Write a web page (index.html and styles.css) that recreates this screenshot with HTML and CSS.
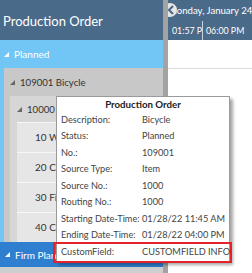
FILE: index.html
```html
<!DOCTYPE html>
<html>
<head>
<meta charset="utf-8">
<link rel="stylesheet" href="styles.css">
</head>
<body>
<div class="app">
  <div class="left">
    <div class="left-head">Production Order</div>
    <div class="group planned">
      <div class="group-title"><span class="tri"></span>Planned</div>
      <div class="group-body">
        <div class="lvl1">
          <div class="lvl1-title"><span class="tri dark"></span>109001 Bicycle</div>
          <div class="lvl1-body">
            <div class="lvl2">
              <div class="lvl2-title"><span class="tri dark"></span>10000</div>
              <div class="lvl2-body">
                <div class="op">10 Wheels</div>
                <div class="op">20 Chassis</div>
                <div class="op">30 Finish</div>
                <div class="op">40 Control</div>
              </div>
            </div>
          </div>
        </div>
      </div>
    </div>
    <div class="group firm">
      <div class="group-title"><span class="tri"></span>Firm Planned</div>
    </div>
    <div class="left-foot"></div>
  </div>
  <div class="split"></div>
  <div class="right">
    <div class="time-head">
      <div class="day-line"><span class="day">Monday, January 24, 2022</span><span class="nav"><svg width="8" height="10" viewBox="0 0 8 10"><path d="M6 1 L2 5 L6 9" fill="none" stroke="#4a6a8a" stroke-width="2.2"/></svg></span></div>
      <div class="hour-line">
        <div class="hour first">01:57 PM</div>
        <div class="hour">06:00 PM</div>
      </div>
    </div>
    <div class="time-body">
      <div class="trow r28"></div>
    </div>
  </div>
</div>
<div class="tooltip">
  <div class="tt-title">Production Order</div>
  <div class="tt-grid">
    <span>Description:</span><span>Bicycle</span>
    <span>Status:</span><span>Planned</span>
    <span>No.:</span><span>109001</span>
    <span>Source Type:</span><span>Item</span>
    <span>Source No.:</span><span>1000</span>
    <span>Routing No.:</span><span>1000</span>
    <span>Starting Date-Time:</span><span>01/28/22 11:45 AM</span>
    <span>Ending Date-Time:</span><span>01/28/22 04:00 PM</span>
    <span>CustomField:</span><span>CUSTOMFIELD INFO</span>
  </div>
</div>
<div class="highlight"></div>
</body>
</html>
```
FILE: styles.css
```css
* { box-sizing: border-box; }
html, body { margin: 0; padding: 0; }
body {
  width: 252px;
  height: 273px;
  overflow: hidden;
  position: relative;
  font-family: "Lato", "Open Sans", sans-serif;
  background: #fff;
}
.app {
  display: flex;
  height: 273px;
}
.left {
  width: 163px;
  flex-shrink: 0;
  display: flex;
  flex-direction: column;
  overflow: hidden;
  background: #c9c9c9;
}
.left-head {
  height: 40px;
  background: #4a6a8a;
  color: #fff;
  font-size: 13px;
  line-height: 16px;
  padding: 13px 0 0 3px;
  white-space: nowrap;
}
.group-title {
  display: flex;
  align-items: center;
  color: #fff;
  font-size: 10px;
  white-space: nowrap;
}
.tri {
  width: 0;
  height: 0;
  border-left: 5px solid transparent;
  border-bottom: 5px solid #fff;
  margin-right: 5px;
}
.tri.dark { border-bottom-color: #666; }
.planned .group-title {
  height: 28px;
  background: #72c6f6;
  padding-left: 4px;
}
.planned .group-body {
  background: #72c6f6;
  padding-left: 4px;
}
.lvl1 { background: #c8c8c8; }
.lvl1-title, .lvl2-title {
  display: flex;
  align-items: center;
  color: #333;
  font-size: 9.6px;
  white-space: nowrap;
}
.lvl1-title { height: 28px; padding-left: 6px; }
.lvl1-body { padding-left: 6px; }
.lvl2 { background: #d6d6d6; }
.lvl2-title { height: 26px; padding-left: 7px; }
.lvl2-body { padding-left: 7px; }
.op {
  height: 30px;
  line-height: 29px;
  background: #e6e6e6;
  border-top: 1px solid #f6f6f6;
  color: #333;
  font-size: 10px;
  padding-left: 18px;
  white-space: nowrap;
}
.firm .group-title {
  height: 25px;
  background: #2f7fd1;
  padding-left: 5px;
}
.left-foot { flex: 1; background: #cfcfcf; }
.split { width: 5px; flex-shrink: 0; background: #a3a3a3; }
.right { flex: 1; min-width: 0; overflow: hidden; display: flex; flex-direction: column; }
.time-head {
  height: 40px;
  background: #4a6a8a;
  color: #fff;
  white-space: nowrap;
}
.day-line {
  height: 21px;
  position: relative;
  display: flex;
  align-items: center;
  font-size: 9.6px;
}
.nav {
  position: absolute;
  left: -5px;
  top: 3px;
  width: 14px;
  height: 14px;
  border-radius: 50%;
  background: #e6e6e6;
  display: flex;
  align-items: center;
  justify-content: flex-end;
  padding-right: 2px;
}
.nav svg { display: block; }
.hour-line { height: 19px; display: flex; font-size: 8.8px; }
.hour { flex-shrink: 0; padding: 4px 0 0 3px; width: 80px; overflow: hidden; }
.hour.first { width: 35px; padding-left: 4px; border-right: 1px solid #c8d2dc; }
.time-body { flex: 1; }
.trow { border-bottom: 1px solid #dcdcdc; }
.r28 { height: 29px; }
.tooltip {
  position: absolute;
  left: 56px;
  top: 96px;
  width: 174px;
  height: 166px;
  background: #fff;
  border: 1px solid #9a9a9a;
  box-shadow: 3px 3px 3px rgba(0,0,0,0.35);
  font-size: 9.2px;
  color: #444;
  padding: 0 4px;
}
.tt-title {
  text-align: center;
  font-weight: bold;
  color: #222;
  font-size: 9.7px;
  line-height: 14px;
}
.tt-grid {
  display: grid;
  grid-template-columns: 81px 1fr;
  grid-auto-rows: 16.5px;
  align-items: center;
  white-space: nowrap;
}
.highlight {
  position: absolute;
  left: 53px;
  top: 242px;
  width: 179px;
  height: 21px;
  border: 2px solid #e3232a;
}
```
